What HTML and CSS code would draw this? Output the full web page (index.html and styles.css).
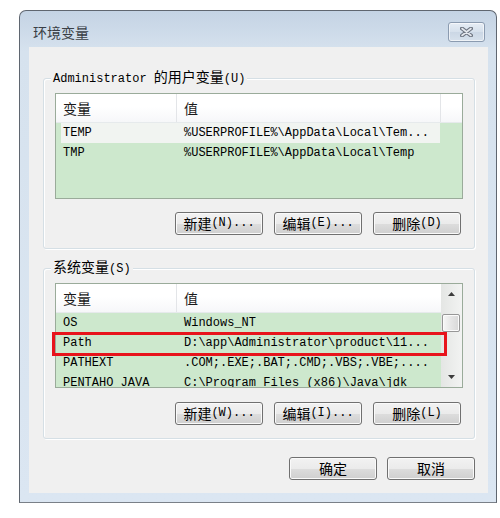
FILE: index.html
```html
<!DOCTYPE html>
<html lang="zh-CN">
<head>
<meta charset="utf-8">
<title>环境变量</title>
<link rel="stylesheet" href="styles.css">
</head>
<body>
<div class="window">
  <div class="titlebar">
    <span class="title">环境变量</span>
    <button class="close" aria-label="关闭">
      <svg width="13" height="10" viewBox="0 0 13 10">
        <path d="M2 1.5 L11 8.5 M11 1.5 L2 8.5" stroke="#6d7480" stroke-width="4" stroke-linecap="round" fill="none"/>
        <path d="M2 1.5 L11 8.5 M11 1.5 L2 8.5" stroke="#e4e8ee" stroke-width="1.6" stroke-linecap="round" fill="none"/>
      </svg>
    </button>
  </div>
  <div class="client">
    <section class="group">
      <div class="legend">Administrator <span class="cjk">的用户变量</span>(U)</div>
      <div class="list list-user">
        <div class="row head"><span class="c1 cjk">变量</span><span class="c2 cjk">值</span><span class="c3"></span></div>
        <div class="row sel"><span class="c1">TEMP</span><span class="c2">%USERPROFILE%\AppData\Local\Tem...</span><span class="c3"></span></div>
        <div class="row"><span class="c1">TMP</span><span class="c2">%USERPROFILE%\AppData\Local\Temp</span><span class="c3"></span></div>
      </div>
      <div class="buttons">
        <button class="btn"><span class="cjk">新建</span>(N)...</button>
        <button class="btn"><span class="cjk">编辑</span>(E)...</button>
        <button class="btn"><span class="cjk">删除</span>(D)</button>
      </div>
    </section>
    <section class="group">
      <div class="legend"><span class="cjk">系统变量</span>(S)</div>
      <div class="list list-sys">
        <div class="list-main">
          <div class="row head"><span class="c1 cjk">变量</span><span class="c2 cjk">值</span></div>
          <div class="row"><span class="c1">OS</span><span class="c2">Windows_NT</span></div>
          <div class="row"><span class="c1">Path</span><span class="c2">D:\app\Administrator\product\11...</span></div>
          <div class="row"><span class="c1">PATHEXT</span><span class="c2">.COM;.EXE;.BAT;.CMD;.VBS;.VBE;....</span></div>
          <div class="row"><span class="c1">PENTAHO_JAVA</span><span class="c2">C:\Program Files (x86)\Java\jdk</span></div>
        </div>
        <div class="scrollbar">
          <div class="sb-btn">
            <svg width="7" height="4" viewBox="0 0 7 4"><polygon points="0,4 3.5,0 7,4" fill="#3c3c3c"/></svg>
          </div>
          <div class="sb-track"><div class="sb-thumb"></div></div>
          <div class="sb-btn">
            <svg width="7" height="4" viewBox="0 0 7 4"><polygon points="0,0 7,0 3.5,4" fill="#3c3c3c"/></svg>
          </div>
        </div>
        <div class="highlight"></div>
      </div>
      <div class="buttons">
        <button class="btn"><span class="cjk">新建</span>(W)...</button>
        <button class="btn"><span class="cjk">编辑</span>(I)...</button>
        <button class="btn"><span class="cjk">删除</span>(L)</button>
      </div>
    </section>
    <div class="dialog-buttons">
      <button class="btn"><span class="cjk">确定</span></button>
      <button class="btn"><span class="cjk">取消</span></button>
    </div>
  </div>
</div>
</body>
</html>
```
FILE: styles.css
```css
html, body {
  margin: 0;
  padding: 0;
  background: #ffffff;
}

body {
  font-family: "Liberation Mono", "Noto Sans CJK SC", monospace;
  font-size: 12px;
  color: #000;
}

.cjk {
  font-family: "Noto Sans CJK SC", sans-serif;
  font-size: 14px;
}

.window {
  box-sizing: border-box;
  width: 478px;
  height: 493px;
  margin: 10px 0 0 19px;
  border: 1px solid #5f6670;
  border-bottom-color: #7a8088;
  border-radius: 7px 7px 0 0;
  background: linear-gradient(#c4d3e4, #d6e2ee 40px, #dbe6f2);
  padding: 0 8px 9px 9px;
  display: flex;
  flex-direction: column;
}

.titlebar {
  height: 36px;
  display: flex;
  justify-content: space-between;
  align-items: flex-start;
}

.title {
  margin: 13px 0 0 4px;
  font-family: "Noto Sans CJK SC", sans-serif;
  font-size: 14px;
  line-height: 16px;
  color: #3a3f46;
}

.close {
  margin: 11px 3px 0 0;
  width: 37px;
  height: 20px;
  padding: 0;
  border: 1px solid #8b9bb0;
  border-radius: 3px;
  background: linear-gradient(#e6edf5, #d6e0ec 50%, #cbd7e5 51%, #d7e1ec);
  box-shadow: inset 0 0 0 1px rgba(255, 255, 255, 0.6);
  display: flex;
  align-items: center;
  justify-content: center;
}

.client {
  flex: 1;
  box-sizing: border-box;
  background: #f0f0f0;
  padding: 31px 13px 0 14px;
}

.group {
  border: 1px solid #d5dfe5;
  border-radius: 3px;
  box-shadow: inset 1px 1px 0 #ffffff, 1px 1px 0 #ffffff;
  padding: 0 11px 13px 11px;
}

.group + .group {
  margin-top: 19px;
}

.legend {
  width: max-content;
  height: 16px;
  line-height: 16px;
  margin: -11px 0 0 -4px;
  padding: 0 2px;
  background: #f0f0f0;
  white-space: nowrap;
}

.legend .cjk {
  line-height: 16px;
}

.list {
  margin-top: 9px;
  border: 1px solid #9aab9a;
  background: #cde8cd;
  overflow: hidden;
  position: relative;
}

.list-user {
  height: 104px;
}

.list-sys {
  height: 103px;
  display: flex;
  overflow: visible;
}

.list-main {
  width: 385px;
  height: 103px;
  overflow: hidden;
}

.row {
  display: grid;
  grid-template-columns: 121px 264px 1fr;
  height: 20px;
  line-height: 20px;
  white-space: nowrap;
}

.list-sys .row {
  grid-template-columns: 121px 264px;
}

.row span {
  display: block;
  overflow: hidden;
  padding-left: 7px;
}

.row.head {
  height: 28px;
  line-height: 28px;
  border-bottom: 1px solid #e6eaec;
  background: linear-gradient(#ffffff, #ffffff 45%, #f6f7f9);
}

.row.head .c1 {
  border-right: 1px solid #e3e5e8;
}

.list-user .row.head .c2 {
  border-right: 1px solid #e3e5e8;
}

.row.head .cjk {
  line-height: 28px;
  color: #1b1b1b;
}

.row.sel {
  background: linear-gradient(to right, transparent 5px, #f1f4f1 5px, #f1f4f1 384px, transparent 384px);
}

.scrollbar {
  width: 21px;
  height: 103px;
  display: flex;
  flex-direction: column;
  background: linear-gradient(to right, #e4e6e4, #f2f3f2);
}

.sb-btn {
  height: 20px;
  display: flex;
  align-items: center;
  justify-content: center;
}

.sb-track {
  flex: 1;
  padding-top: 10px;
}

.sb-thumb {
  box-sizing: border-box;
  width: 18px;
  height: 18px;
  margin-left: 1px;
  border: 1px solid #979797;
  border-radius: 2px;
  background: linear-gradient(to right, #f7f7f7, #e6e6e6 50%, #d8d8d8);
  box-shadow: inset 0 0 0 1px #fbfbfb;
}

.highlight {
  position: absolute;
  left: -4px;
  top: 48px;
  width: 395px;
  height: 24px;
  box-sizing: border-box;
  border: 3px solid #e8141c;
}

.buttons {
  display: flex;
  justify-content: flex-end;
  gap: 11px;
  margin-top: 13px;
  padding-right: 2px;
}

.group + .group .buttons {
  margin-top: 14px;
}

.btn {
  box-sizing: border-box;
  width: 88px;
  height: 23px;
  padding: 0;
  border: 1px solid #707070;
  border-radius: 3px;
  background: linear-gradient(#f2f2f2, #ebebeb 50%, #dddddd 51%, #cfcfcf);
  box-shadow: inset 0 0 0 1px #fafafa;
  font-family: "Liberation Mono", "Noto Sans CJK SC", monospace;
  font-size: 12px;
  line-height: 21px;
  color: #000;
  white-space: nowrap;
  display: flex;
  align-items: center;
  justify-content: center;
}

.btn .cjk {
  line-height: 21px;
}

.dialog-buttons {
  display: flex;
  justify-content: flex-end;
  gap: 10px;
  margin-top: 18px;
}
```
